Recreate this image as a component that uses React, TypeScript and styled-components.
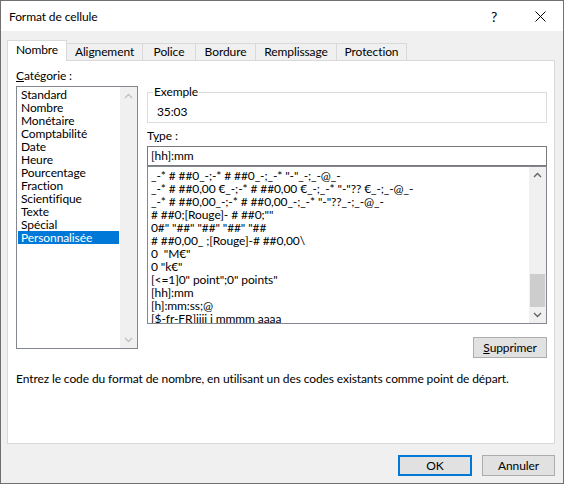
import React from "react";
import styled, { createGlobalStyle } from "styled-components";

const GlobalStyle = createGlobalStyle`
  html, body {
    margin: 0;
    padding: 0;
    background: #ffffff;
  }
  body {
    font-family: Lato, "Noto Sans", sans-serif;
    font-size: 12px;
    letter-spacing: -0.1px;
    color: #000000;
  }
  * {
    box-sizing: border-box;
  }
`;

const Window = styled.div`
  width: 564px;
  height: 484px;
  border: 1px solid #707070;
  background: #f0f0f0;
  display: flex;
  flex-direction: column;
`;

const TitleBar = styled.div`
  height: 30px;
  background: #ffffff;
  display: flex;
  align-items: center;
  padding-left: 8px;
`;

const Title = styled.div`
  flex: 1;
  font-size: 12px;
`;

const CaptionButton = styled.div`
  width: 46px;
  height: 30px;
  display: flex;
  align-items: center;
  justify-content: center;
  font-size: 14px;
  color: #000;
`;

const Body = styled.div`
  flex: 1;
  display: flex;
  flex-direction: column;
  padding: 9px 0 0 6px;
`;

const TabStrip = styled.div`
  display: flex;
  align-items: flex-end;
  height: 20px;
  position: relative;
  z-index: 1;
`;

const Tab = styled.div<{ $active?: boolean; $width: number }>`
  width: ${(p) => p.$width}px;
  height: ${(p) => (p.$active ? 21 : 17)}px;
  margin-bottom: ${(p) => (p.$active ? -1 : 0)}px;
  background: ${(p) => (p.$active ? "#ffffff" : "#f0f0f0")};
  border: 1px solid #d9d9d9;
  border-bottom: none;
  border-left: ${(p) => (p.$active ? "1px solid #d9d9d9" : "none")};
  display: flex;
  align-items: center;
  justify-content: center;
  padding-bottom: ${(p) => (p.$active ? 3 : 1)}px;
`;

const Panel = styled.div`
  width: 548px;
  height: 384px;
  background: #ffffff;
  border: 1px solid #d9d9d9;
  padding: 7px 7px 0 8px;
  display: flex;
  flex-direction: column;
`;

const Columns = styled.div`
  display: flex;
  gap: 9px;
  height: 290px;
`;

const LeftColumn = styled.div`
  width: 122px;
  display: flex;
  flex-direction: column;
`;

const RightColumn = styled.div`
  width: 400px;
  display: flex;
  flex-direction: column;
  padding-top: 16px;
`;

const Label = styled.div<{ $gap?: number }>`
  line-height: 16px;
  height: 16px;
  margin-top: ${(p) => p.$gap ?? 0}px;
  margin-bottom: 2px;
  white-space: nowrap;
`;

const ListBox = styled.div<{ $height: number }>`
  height: ${(p) => p.$height}px;
  border: 1px solid #828790;
  background: #ffffff;
  display: flex;
  overflow: hidden;
`;

const Rows = styled.div<{ $top: number; $left: number }>`
  flex: 1;
  padding: ${(p) => p.$top}px 1px 0 ${(p) => p.$left}px;
  overflow: hidden;
`;

const Row = styled.div<{ $selected?: boolean }>`
  height: 13px;
  line-height: 13px;
  padding-left: 3px;
  white-space: pre;
  background: ${(p) => (p.$selected ? "#0078d7" : "transparent")};
  color: ${(p) => (p.$selected ? "#ffffff" : "#000000")};
`;

const ScrollBar = styled.div`
  width: 17px;
  background: #f0f0f0;
  display: flex;
  flex-direction: column;
`;

const ScrollArrow = styled.div`
  height: 17px;
  display: flex;
  align-items: center;
  justify-content: center;
`;

const Track = styled.div`
  flex: 1;
`;

const Thumb = styled.div<{ $offset: number; $size: number }>`
  margin: ${(p) => p.$offset}px 1px 0 1px;
  height: ${(p) => p.$size}px;
  background: #cdcdcd;
`;

const GroupBox = styled.fieldset`
  margin: 0;
  border: 1px solid #dcdcdc;
  padding: 4px 9px 2px;
  min-width: 0;
`;

const Legend = styled.legend`
  padding: 0 1px;
  margin-left: -4px;
  line-height: 16px;
`;

const Sample = styled.div`
  line-height: 16px;
`;

const TextInput = styled.div`
  height: 20px;
  border: 1px solid #7a7a7a;
  line-height: 18px;
  padding: 0 3px;
`;

const ButtonRow = styled.div`
  display: flex;
  justify-content: flex-end;
  margin-top: 13px;
`;

const Button = styled.div<{ $default?: boolean; $width: number }>`
  width: ${(p) => p.$width}px;
  height: 21px;
  background: #e1e1e1;
  border: ${(p) => (p.$default ? "2px solid #0078d7" : "1px solid #adadad")};
  display: flex;
  align-items: center;
  justify-content: center;
`;

const Description = styled.div`
  margin-top: 13px;
  line-height: 16px;
  white-space: nowrap;
`;

const Footer = styled.div`
  display: flex;
  justify-content: flex-end;
  gap: 10px;
  width: 548px;
  padding-top: 11px;
`;

const Chevron = ({ up, color }: { up?: boolean; color: string }) => (
  <svg width="9" height="6" viewBox="0 0 9 6">
    <path
      d={up ? "M1 5 L4.5 1.5 L8 5" : "M1 1 L4.5 4.5 L8 1"}
      fill="none"
      stroke={color}
      strokeWidth="1.3"
    />
  </svg>
);

const CloseIcon = () => (
  <svg width="11" height="11" viewBox="0 0 11 11">
    <path d="M0.5 0.5 L10.5 10.5 M10.5 0.5 L0.5 10.5" stroke="#000" strokeWidth="1" />
  </svg>
);

const tabs = [
  { label: "Nombre", width: 60 },
  { label: "Alignement", width: 76 },
  { label: "Police", width: 53 },
  { label: "Bordure", width: 60 },
  { label: "Remplissage", width: 81 },
  { label: "Protection", width: 70 },
];

const categories = [
  "Standard",
  "Nombre",
  "Monétaire",
  "Comptabilité",
  "Date",
  "Heure",
  "Pourcentage",
  "Fraction",
  "Scientifique",
  "Texte",
  "Spécial",
  "Personnalisée",
];

const formats = [
  '_-* # ##0_-;-* # ##0_-;_-* "-"_-;_-@_-',
  '_-* # ##0,00 €_-;-* # ##0,00 €_-;_-* "-"?? €_-;_-@_-',
  '_-* # ##0,00_-;-* # ##0,00_-;_-* "-"??_-;_-@_-',
  '# ##0;[Rouge]- # ##0;""',
  '0#" "##" "##" "##" "##',
  "# ##0,00_ ;[Rouge]-# ##0,00\\",
  '0  "M€"',
  '0 "k€"',
  '[<=1]0" point";0" points"',
  "[hh]:mm",
  "[h]:mm:ss;@",
  "[$-fr-FR]jjjj j mmmm aaaa",
];

export default function App() {
  return (
    <>
      <GlobalStyle />
      <Window>
        <TitleBar>
          <Title>Format de cellule</Title>
          <CaptionButton>?</CaptionButton>
          <CaptionButton>
            <CloseIcon />
          </CaptionButton>
        </TitleBar>
        <Body>
          <TabStrip>
            {tabs.map((t, i) => (
              <Tab key={t.label} $active={i === 0} $width={t.width}>
                {t.label}
              </Tab>
            ))}
          </TabStrip>
          <Panel>
            <Columns>
              <LeftColumn>
                <Label>
                  <u>C</u>atégorie :
                </Label>
                <ListBox $height={263}>
                  <Rows $top={1} $left={1}>
                    {categories.map((c) => (
                      <Row key={c} $selected={c === "Personnalisée"}>
                        {c}
                      </Row>
                    ))}
                  </Rows>
                  <ScrollBar>
                    <ScrollArrow>
                      <Chevron up color="#c0c0c0" />
                    </ScrollArrow>
                    <Track />
                    <ScrollArrow>
                      <Chevron color="#c0c0c0" />
                    </ScrollArrow>
                  </ScrollBar>
                </ListBox>
              </LeftColumn>
              <RightColumn>
                <GroupBox>
                  <Legend>Exemple</Legend>
                  <Sample>35:03</Sample>
                </GroupBox>
                <Label $gap={5}>
                  T<u>y</u>pe :
                </Label>
                <TextInput>[hh]:mm</TextInput>
                <ListBox $height={160}>
                  <Rows $top={2} $left={0}>
                    {formats.map((f) => (
                      <Row key={f}>{f}</Row>
                    ))}
                  </Rows>
                  <ScrollBar>
                    <ScrollArrow>
                      <Chevron up color="#606060" />
                    </ScrollArrow>
                    <Track>
                      <Thumb $offset={90} $size={33} />
                    </Track>
                    <ScrollArrow>
                      <Chevron color="#606060" />
                    </ScrollArrow>
                  </ScrollBar>
                </ListBox>
                <ButtonRow>
                  <Button $width={74}>
                    <u>S</u>upprimer
                  </Button>
                </ButtonRow>
              </RightColumn>
            </Columns>
            <Description>
              Entrez le code du format de nombre, en utilisant un des codes existants comme point de départ.
            </Description>
          </Panel>
          <Footer>
            <Button $default $width={74}>
              OK
            </Button>
            <Button $width={73}>Annuler</Button>
          </Footer>
        </Body>
      </Window>
    </>
  );
}
